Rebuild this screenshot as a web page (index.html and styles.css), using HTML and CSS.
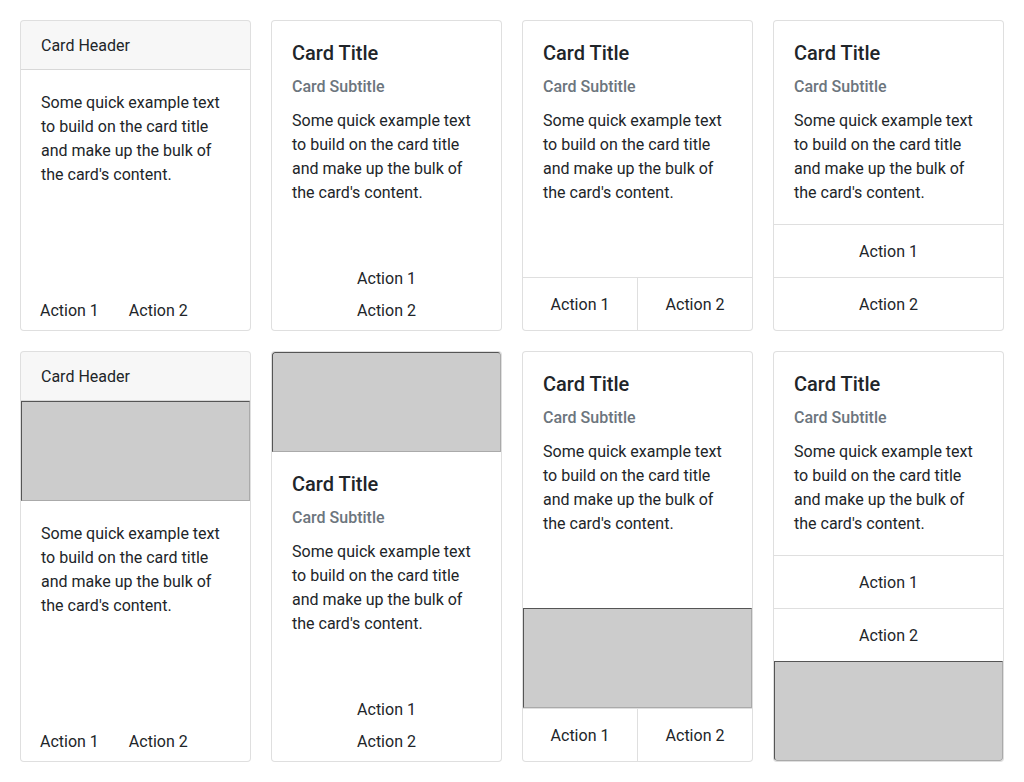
FILE: index.html
```html
<!DOCTYPE html>
<html>
<head>
<meta charset="utf-8">
<link rel="stylesheet" href="styles.css">
</head>
<body>
<div class="grid">
  <div class="card">
    <div class="card-header">Card Header</div>
    <div class="card-body grow"><p class="card-text">Some quick example text to build on the card title and make up the bulk of the card's content.</p></div>
    <div class="actions"><span class="action">Action 1</span><span class="action">Action 2</span></div>
  </div>
  <div class="card">
    <div class="card-body grow">
      <h5 class="card-title">Card Title</h5>
      <h6 class="card-subtitle">Card Subtitle</h6>
      <p class="card-text">Some quick example text to build on the card title and make up the bulk of the card's content.</p>
    </div>
    <div class="actions vertical"><span class="action">Action 1</span><span class="action">Action 2</span></div>
  </div>
  <div class="card">
    <div class="card-body grow">
      <h5 class="card-title">Card Title</h5>
      <h6 class="card-subtitle">Card Subtitle</h6>
      <p class="card-text">Some quick example text to build on the card title and make up the bulk of the card's content.</p>
    </div>
    <div class="actions split"><span class="action">Action 1</span><span class="action">Action 2</span></div>
  </div>
  <div class="card">
    <div class="card-body grow">
      <h5 class="card-title">Card Title</h5>
      <h6 class="card-subtitle">Card Subtitle</h6>
      <p class="card-text">Some quick example text to build on the card title and make up the bulk of the card's content.</p>
    </div>
    <div class="actions stacked"><span class="action">Action 1</span><span class="action">Action 2</span></div>
  </div>

  <div class="card">
    <div class="card-header">Card Header</div>
    <div class="card-img"></div>
    <div class="card-body grow"><p class="card-text">Some quick example text to build on the card title and make up the bulk of the card's content.</p></div>
    <div class="actions"><span class="action">Action 1</span><span class="action">Action 2</span></div>
  </div>
  <div class="card">
    <div class="card-img top"></div>
    <div class="card-body grow">
      <h5 class="card-title">Card Title</h5>
      <h6 class="card-subtitle">Card Subtitle</h6>
      <p class="card-text">Some quick example text to build on the card title and make up the bulk of the card's content.</p>
    </div>
    <div class="actions vertical"><span class="action">Action 1</span><span class="action">Action 2</span></div>
  </div>
  <div class="card">
    <div class="card-body grow">
      <h5 class="card-title">Card Title</h5>
      <h6 class="card-subtitle">Card Subtitle</h6>
      <p class="card-text">Some quick example text to build on the card title and make up the bulk of the card's content.</p>
    </div>
    <div class="card-img"></div>
    <div class="actions split"><span class="action">Action 1</span><span class="action">Action 2</span></div>
  </div>
  <div class="card">
    <div class="card-body grow">
      <h5 class="card-title">Card Title</h5>
      <h6 class="card-subtitle">Card Subtitle</h6>
      <p class="card-text">Some quick example text to build on the card title and make up the bulk of the card's content.</p>
    </div>
    <div class="actions stacked"><span class="action">Action 1</span><span class="action">Action 2</span></div>
    <div class="card-img bottom"></div>
  </div>
</div>
</body>
</html>
```
FILE: styles.css
```css
* { box-sizing: border-box; }
body {
  margin: 0;
  background: #fff;
  color: #212529;
  font-family: Roboto, "Noto Sans", sans-serif;
  font-size: 16px;
  line-height: 24px;
}
.grid {
  padding: 20px;
  display: grid;
  grid-template-columns: repeat(4, 1fr);
  gap: 20px;
  align-items: stretch;
}
.card {
  display: flex;
  flex-direction: column;
  border: 1px solid rgba(0, 0, 0, 0.125);
  border-radius: 4px;
  background: #fff;
  overflow: hidden;
}
.card-header {
  padding: 13px 20px 11px;
  background: rgba(0, 0, 0, 0.03);
  border-bottom: 1px solid rgba(0, 0, 0, 0.125);
}
.card-body {
  padding: 20px;
}
.grow { flex: 1 1 auto; }
.card-title {
  margin: 0 0 12px;
  font-size: 20px;
  font-weight: 500;
  line-height: 24px;
}
.card-subtitle {
  margin: 0 0 12px;
  font-size: 16px;
  font-weight: 500;
  line-height: 19.2px;
  color: #6c757d;
}
.card-text {
  margin: 0 0 -1px;
  padding-top: 1px;
}
.card-img {
  height: 100px;
  flex: none;
  background: #ccc;
  border: 1px solid;
  border-color: #555 #aaa #aaa #555;
}
.card-img.top { border-radius: 3px 3px 0 0; }
.card-img.bottom { border-radius: 0 0 3px 3px; }
.actions {
  display: flex;
  gap: 6px;
  padding: 9px 7px 7px;
  flex: none;
}
.action {
  padding: 0 12px;
  line-height: 24px;
  color: #212529;
}
.actions.vertical {
  flex-direction: column;
  align-items: center;
  gap: 8px;
  padding: 9px 8px 7px;
}
.actions.split {
  gap: 0;
  padding: 0;
  border-top: 1px solid rgba(0, 0, 0, 0.125);
}
.actions.split .action {
  flex: 1;
  text-align: center;
  padding: 15px 0 13px;
}
.actions.split .action + .action {
  border-left: 1px solid rgba(0, 0, 0, 0.125);
}
.actions.stacked {
  flex-direction: column;
  gap: 0;
  padding: 0;
}
.actions.stacked .action {
  text-align: center;
  padding: 15px 0 13px;
  border-top: 1px solid rgba(0, 0, 0, 0.125);
}
```
